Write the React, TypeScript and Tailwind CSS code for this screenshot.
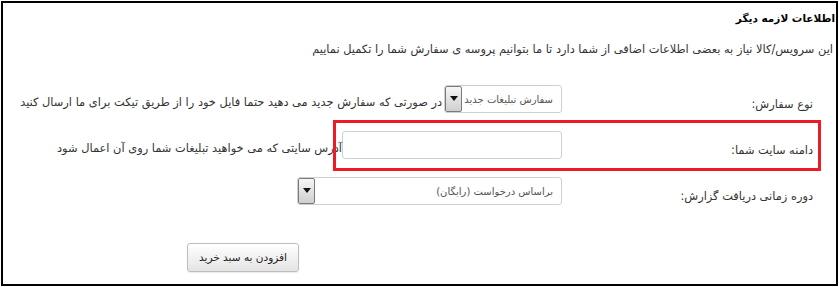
import React from "react";

const Arrow = () => (
  <div className="flex h-full w-[17px] shrink-0 items-start justify-center rounded-[2px] border border-[#7a7a7a] bg-gradient-to-b from-[#f6f6f6] to-[#cfcfcf] pt-[9px]">
    <svg width="8" height="5" viewBox="0 0 8 5">
      <path d="M0 0h8L4 5z" fill="#111" />
    </svg>
  </div>
);

const Select = ({ value, width }: { value: string; width: string }) => (
  <div className={`flex h-[28px] shrink-0 items-center overflow-hidden rounded-[3px] border border-[#cfcfcf] bg-white ${width}`}>
    <span className="flex-1 whitespace-nowrap pr-[8px] text-[10px] text-[#555]">{value}</span>
    <Arrow />
  </div>
);

const Row = ({ label, children }: { label: string; children: React.ReactNode }) => (
  <div className="flex h-[28px] items-center">
    <div className="w-[274px] shrink-0 pr-[23px] pt-[9px] text-[11.4px] leading-4">{label}</div>
    {children}
  </div>
);

export default function App() {
  return (
    <div className="bg-white pl-px pt-px">
      <div
        dir="rtl"
        className="relative h-[285px] w-[837px] border-2 border-black bg-white font-['DejaVu_Sans',sans-serif] text-[#333]"
      >
        <h3 className="mt-[7px] pr-px text-[10.5px] font-bold leading-4 text-black">اطلاعات لازمه دیگر</h3>
        <p className="mt-[15px] pr-[3px] text-[11.4px] leading-4">
          این سرویس/کالا نیاز به بعضی اطلاعات اضافی از شما دارد تا ما بتوانیم پروسه ی سفارش شما را تکمیل نماییم
        </p>

        <div className="mt-[28px] flex flex-col gap-[18px]">
          <Row label="نوع سفارش:">
            <Select value="سفارش تبلیغات جدید" width="w-[118px]" />
            <span className="whitespace-nowrap pr-[2px] pt-[6px] text-[11.4px] leading-4">
              در صورتی که سفارش جدید می دهید حتما فایل خود را از طریق تیکت برای ما ارسال کنید
            </span>
          </Row>
          <Row label="دامنه سایت شما:">
            <input className="h-[28px] w-[220px] shrink-0 rounded-[3px] border border-[#cfcfcf] bg-white outline-none" />
            <span className="whitespace-nowrap pt-[6px] text-[11.4px] leading-4">
              آدرس سایتی که می خواهید تبلیغات شما روی آن اعمال شود
            </span>
          </Row>
          <Row label="دوره زمانی دریافت گزارش:">
            <Select value="براساس درخواست (رایگان)" width="w-[265px]" />
          </Row>
        </div>

        <div className="mt-[38px] pr-[537px]">
          <button className="h-[29px] w-[112px] rounded-[3px] border border-[#bdbdbd] bg-gradient-to-b from-white to-[#e4e4e4] text-[10.5px] text-[#222] shadow-[0_1px_1px_rgba(0,0,0,0.08)]">
            افزودن به سبد خرید
          </button>
        </div>

        <div className="pointer-events-none absolute left-[330px] top-[117px] h-[51px] w-[488px] border-[3px] border-[#ed1c24]" />
      </div>
    </div>
  );
}
